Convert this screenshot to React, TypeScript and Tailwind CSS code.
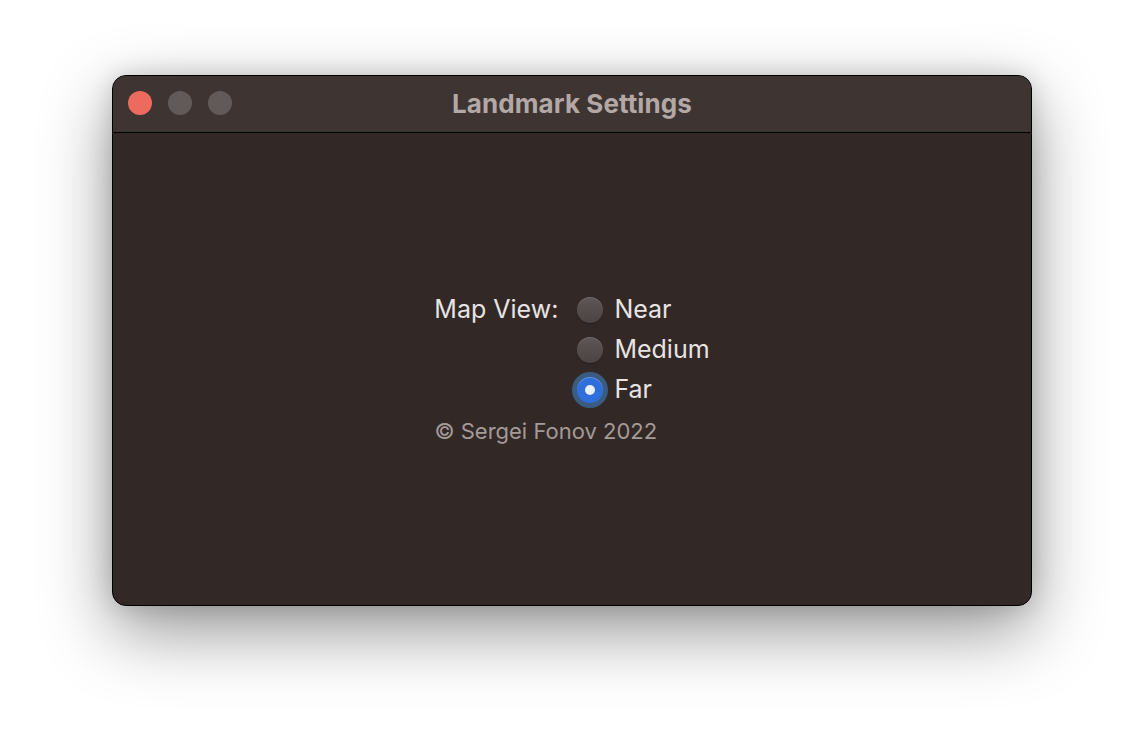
import React from 'react';

const font = { fontFamily: 'Inter, "Liberation Sans", sans-serif' };

const Radio: React.FC<{ checked?: boolean }> = ({ checked }) => {
  if (checked) {
    return (
      <div className="flex h-[26px] w-[26px] items-center justify-center rounded-full bg-[#2f6fdc] ring-[5px] ring-[#3a5b82] shadow-[inset_0_1px_0_rgba(255,255,255,0.25)]">
        <div className="h-[10px] w-[10px] rounded-full bg-[#e8eefb]" />
      </div>
    );
  }
  return (
    <div className="h-[26px] w-[26px] rounded-full bg-gradient-to-b from-[#5f5755] to-[#4b4341] shadow-[inset_0_1px_0_rgba(255,255,255,0.12),0_1px_1px_rgba(0,0,0,0.3)]" />
  );
};

const options = [
  { label: 'Near', checked: false },
  { label: 'Medium', checked: false },
  { label: 'Far', checked: true },
];

export default function App() {
  return (
    <div className="h-[754px] w-[1144px] bg-white pl-[112px] pt-[75px]" style={font}>
      <div className="flex h-[531px] w-[920px] flex-col overflow-hidden rounded-[14px] border border-black bg-[#322927] shadow-[0_25px_70px_rgba(0,0,0,0.42),0_0_24px_rgba(0,0,0,0.15)]">
        <div className="relative flex h-[57px] shrink-0 items-center justify-center border-b border-black bg-[#3e3533]">
          <div className="absolute left-[15px] top-[15px] flex gap-[16px]">
            <div className="h-[24px] w-[24px] rounded-full bg-[#ed6a5e]" />
            <div className="h-[24px] w-[24px] rounded-full bg-[#625a58]" />
            <div className="h-[24px] w-[24px] rounded-full bg-[#625a58]" />
          </div>
          <span className="mt-[-2px] text-[26px] font-bold tracking-[0.1px] text-[#b3a8a5]">Landmark Settings</span>
        </div>
        <div className="flex flex-1 items-center justify-center">
          <div className="flex flex-col pt-[3px]">
            <div className="flex">
              <div className="flex h-[40px] w-[143px] shrink-0 items-center justify-end whitespace-nowrap pr-[19px] text-[25px] text-[#e8e4e3]">
                Map View:
              </div>
              <div className="flex flex-col">
                {options.map((o) => (
                  <div key={o.label} className="flex h-[40px] items-center gap-[11px]">
                    <Radio checked={o.checked} />
                    <span className="text-[25px] text-[#e8e4e3]">{o.label}</span>
                  </div>
                ))}
              </div>
            </div>
            <div className="mt-[1px] whitespace-nowrap text-[22px] leading-[40px] text-[#a49a98]">© Sergei Fonov 2022</div>
          </div>
        </div>
      </div>
    </div>
  );
}
